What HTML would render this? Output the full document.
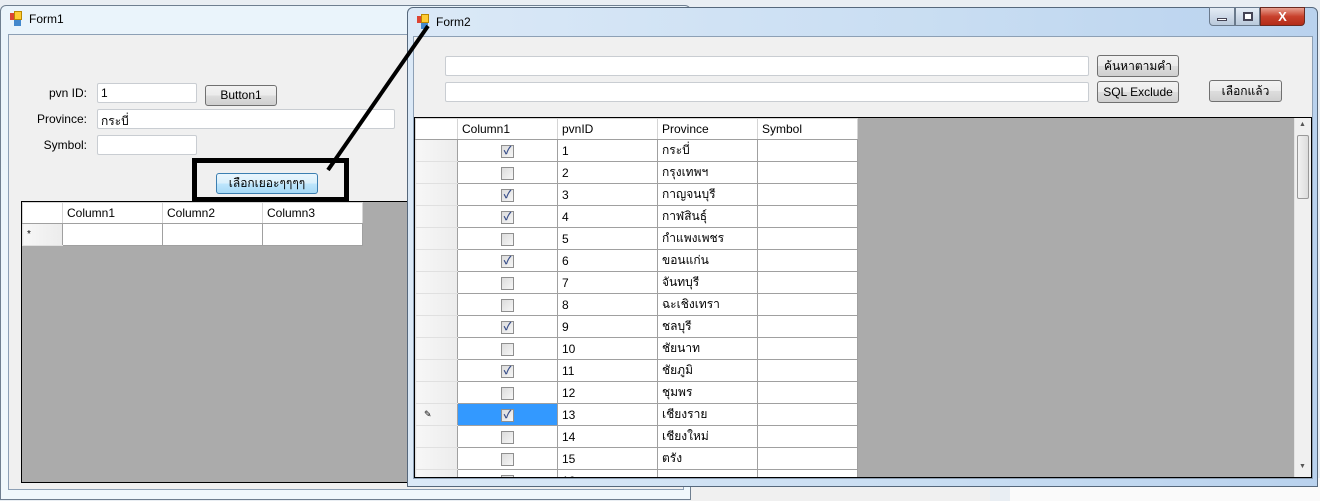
<!DOCTYPE html>
<html><head><meta charset="utf-8">
<style>
*{box-sizing:border-box;margin:0;padding:0}
body{width:1320px;height:501px;position:relative;overflow:hidden;background:#e9eef3;font-family:"Liberation Sans","Noto Sans CJK SC",sans-serif;font-size:12px;color:#000}
.a{position:absolute}
.tb{position:absolute;background:#fff;border:1px solid #c9cdd2;border-radius:2px;padding:2px 3px;font-size:12px}
.btn{position:absolute;border:1px solid #707070;border-radius:3px;background:linear-gradient(#f2f2f2,#ebebeb 50%,#dddddd 51%,#cfcfcf);text-align:center;font-size:12px;line-height:19px}
table{border-collapse:collapse;table-layout:fixed;position:absolute;background:#fff}
td{border:1px solid #a0a0a0;height:22px;padding:0 4px;font-size:12px;white-space:nowrap;overflow:hidden}
tr.h td{height:21px;background:#fff;border-color:#d5d5d5 #d5d5d5 #a0a0a0 #d5d5d5}
td.rh{background:linear-gradient(90deg,#f7f7f7,#ececec);border-color:#e0e0e0;border-right:1px solid #a0a0a0}
td.c{text-align:center}
.cb{display:inline-block;width:13px;height:13px;border:1px solid #8f8f8f;background:linear-gradient(135deg,#dcdcdc,#f6f6f6);vertical-align:middle;font-size:11px;line-height:11px;color:#3a4f8a;font-weight:bold}
</style></head><body>

<div class="a" style="left:690px;top:478px;width:300px;height:23px;background:#f0f0f0"></div>
<div class="a" style="left:1010px;top:478px;width:310px;height:23px;background:#fafafa"></div>

<!-- Form1 -->
<div class="a" style="left:0;top:5px;width:691px;height:495px;background:linear-gradient(#eaf4fb,#f0f8fc);border:1px solid #6f7f90;border-radius:6px 6px 0 0"></div>
<div class="a" style="left:8px;top:11px;width:16px;height:16px">
<div class="a" style="left:2px;top:2px;width:7px;height:7px;background:#d43"></div>
<div class="a" style="left:6px;top:0;width:8px;height:9px;background:#fc3;border:1px solid #b80"></div>
<div class="a" style="left:6px;top:9px;width:7px;height:6px;background:#48c"></div></div>
<div class="a" style="left:29px;top:12px;font-size:12px">Form1</div>
<div class="a" style="left:8px;top:34px;width:676px;height:456px;background:#f0f0f0;border:1px solid #8da0b5"></div>

<div class="a" style="left:40px;top:86px;width:47px;text-align:right">pvn ID:</div>
<div class="tb" style="left:97px;top:83px;width:100px;height:20px">1</div>
<div class="btn" style="left:205px;top:85px;width:72px;height:21px">Button1</div>
<div class="a" style="left:20px;top:112px;width:67px;text-align:right">Province:</div>
<div class="tb" style="left:97px;top:109px;width:298px;height:20px">กระบี่</div>
<div class="a" style="left:30px;top:138px;width:57px;text-align:right">Symbol:</div>
<div class="tb" style="left:97px;top:135px;width:100px;height:20px"></div>
<div class="a" style="left:192px;top:158px;width:157px;height:44px;border:5px solid #000"></div>
<div class="btn" style="left:216px;top:173px;width:102px;height:21px;border-color:#3c7fb1;background:linear-gradient(#eaf6fd,#d9f0fc 50%,#bee6fd 51%,#a7d9f5)">เลือกเยอะๆๆๆๆ</div>

<div class="a" style="left:21px;top:201px;width:400px;height:282px;background:#ababab;border:1px solid #000"></div>
<table style="left:22px;top:202px;width:341px">
<colgroup><col style="width:40px"><col style="width:100px"><col style="width:100px"><col style="width:100px"></colgroup>
<tr class="h"><td class="rh"></td><td>Column1</td><td>Column2</td><td>Column3</td></tr>
<tr><td class="rh" style="font-size:10px">*</td><td></td><td></td><td></td></tr>
</table>

<!-- Form2 -->
<div class="a" style="left:407px;top:7px;width:911px;height:480px;background:linear-gradient(90deg,#dbe9f7,#c8ddf2 60%,#b9d2ee);border:1px solid #56687c;border-radius:6px 6px 0 0"></div>
<div class="a" style="left:415px;top:14px;width:16px;height:16px">
<div class="a" style="left:2px;top:2px;width:7px;height:7px;background:#d43"></div>
<div class="a" style="left:6px;top:0;width:8px;height:9px;background:#fc3;border:1px solid #b80"></div>
<div class="a" style="left:6px;top:9px;width:7px;height:6px;background:#48c"></div></div>
<div class="a" style="left:436px;top:15px;font-size:12px">Form2</div>
<div class="a" style="left:1209px;top:7px;width:26px;height:19px;border:1px solid #6a7a8c;border-radius:0 0 0 4px;background:linear-gradient(#e4ecf5,#b9c9db)"><div class="a" style="left:7px;top:10px;width:10px;height:3px;background:#fff;border:1px solid #445"></div></div>
<div class="a" style="left:1235px;top:7px;width:25px;height:19px;border:1px solid #6a7a8c;background:linear-gradient(#e4ecf5,#b9c9db)"><div class="a" style="left:7px;top:4px;width:10px;height:9px;background:#fff;border:2px solid #445"></div></div>
<div class="a" style="left:1260px;top:7px;width:45px;height:19px;border:1px solid #6a2a20;border-radius:0 0 4px 0;background:linear-gradient(#e8a090,#c8412c 50%,#b32c18);color:#fff;font-weight:bold;text-align:center;line-height:17px;font-size:13px">X</div>
<div class="a" style="left:413px;top:36px;width:900px;height:443px;background:#f0f0f0;border:1px solid #8da0b5"></div>

<div class="tb" style="left:445px;top:56px;width:644px;height:20px"></div>
<div class="tb" style="left:445px;top:82px;width:644px;height:20px"></div>
<div class="btn" style="left:1097px;top:55px;width:82px;height:22px;line-height:20px">ค้นหาตามคำ</div>
<div class="btn" style="left:1097px;top:81px;width:82px;height:22px;line-height:20px">SQL Exclude</div>
<div class="btn" style="left:1209px;top:80px;width:73px;height:22px;line-height:20px">เลือกแล้ว</div>

<div class="a" style="left:414px;top:117px;width:898px;height:361px;background:#ababab;border:1px solid #000;overflow:hidden">
<table style="left:0;top:0;width:442px">
<colgroup><col style="width:42px"><col style="width:100px"><col style="width:100px"><col style="width:100px"><col style="width:100px"></colgroup>
<tr class="h"><td class="rh"></td><td>Column1</td><td>pvnID</td><td>Province</td><td>Symbol</td></tr>
<tr><td class="rh"></td><td class="c"><span class="cb">✓</span></td><td>1</td><td>กระบี่</td><td></td></tr>
<tr><td class="rh"></td><td class="c"><span class="cb"></span></td><td>2</td><td>กรุงเทพฯ</td><td></td></tr>
<tr><td class="rh"></td><td class="c"><span class="cb">✓</span></td><td>3</td><td>กาญจนบุรี</td><td></td></tr>
<tr><td class="rh"></td><td class="c"><span class="cb">✓</span></td><td>4</td><td>กาฬสินธุ์</td><td></td></tr>
<tr><td class="rh"></td><td class="c"><span class="cb"></span></td><td>5</td><td>กำแพงเพชร</td><td></td></tr>
<tr><td class="rh"></td><td class="c"><span class="cb">✓</span></td><td>6</td><td>ขอนแก่น</td><td></td></tr>
<tr><td class="rh"></td><td class="c"><span class="cb"></span></td><td>7</td><td>จันทบุรี</td><td></td></tr>
<tr><td class="rh"></td><td class="c"><span class="cb"></span></td><td>8</td><td>ฉะเชิงเทรา</td><td></td></tr>
<tr><td class="rh"></td><td class="c"><span class="cb">✓</span></td><td>9</td><td>ชลบุรี</td><td></td></tr>
<tr><td class="rh"></td><td class="c"><span class="cb"></span></td><td>10</td><td>ชัยนาท</td><td></td></tr>
<tr><td class="rh"></td><td class="c"><span class="cb">✓</span></td><td>11</td><td>ชัยภูมิ</td><td></td></tr>
<tr><td class="rh"></td><td class="c"><span class="cb"></span></td><td>12</td><td>ชุมพร</td><td></td></tr>
<tr><td class="rh" style="font-size:9px;padding-left:8px">✎</td><td class="c" style="background:#3399ff"><span class="cb">✓</span></td><td>13</td><td>เชียงราย</td><td></td></tr>
<tr><td class="rh"></td><td class="c"><span class="cb"></span></td><td>14</td><td>เชียงใหม่</td><td></td></tr>
<tr><td class="rh"></td><td class="c"><span class="cb"></span></td><td>15</td><td>ตรัง</td><td></td></tr>
<tr><td class="rh"></td><td class="c"><span class="cb"></span></td><td>16</td><td>ตราด</td><td></td></tr>
</table>
<div class="a" style="left:879px;top:0;width:17px;height:359px;background:#f0f0f0;border-left:1px solid #e3e3e3">
<div class="a" style="left:4px;top:3px;font-size:7px;color:#555">▲</div>
<div class="a" style="left:2px;top:17px;width:12px;height:64px;border:1px solid #999;border-radius:2px;background:linear-gradient(90deg,#f2f2f2,#dcdcdc)"></div>
<div class="a" style="left:4px;top:345px;font-size:7px;color:#555">▼</div>
</div>
</div>

<svg class="a" style="left:0;top:0" width="1320" height="501"><line x1="328" y1="170" x2="428" y2="26" stroke="#000" stroke-width="4"/></svg>
</body></html>
